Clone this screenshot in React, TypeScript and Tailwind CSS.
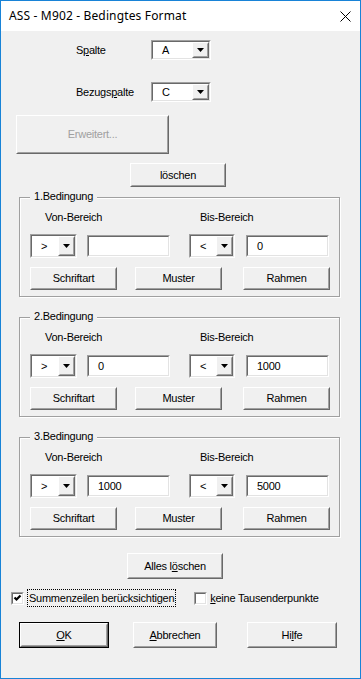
import React from "react";

const font = "font-['Tahoma','Liberation_Sans',sans-serif]";

function Raised({ children, className = "", disabled = false, isDefault = false }: { children?: React.ReactNode; className?: string; disabled?: boolean; isDefault?: boolean }) {
  const inner = (
    <div className="flex h-full w-full border border-t-white border-l-white border-r-[#696969] border-b-[#696969]">
      <div className={`flex h-full w-full items-center justify-center border border-t-[#f0f0f0] border-l-[#f0f0f0] border-r-[#a0a0a0] border-b-[#a0a0a0] bg-[#f0f0f0] ${disabled ? "text-[#a0a0a0]" : "text-black"}`}>
        {children}
      </div>
    </div>
  );
  if (isDefault) {
    return <div className={`border border-black ${className}`}>{inner}</div>;
  }
  return <div className={className}>{inner}</div>;
}

function Sunken({ children, className = "" }: { children?: React.ReactNode; className?: string }) {
  return (
    <div className={`flex border border-t-[#a0a0a0] border-l-[#a0a0a0] border-r-white border-b-white ${className}`}>
      <div className="flex h-full w-full border border-t-[#696969] border-l-[#696969] border-r-[#e3e3e3] border-b-[#e3e3e3] bg-white">
        {children}
      </div>
    </div>
  );
}

function Arrow() {
  return (
    <svg width="7" height="4" viewBox="0 0 7 4">
      <path d="M0 0h7L3.5 4z" fill="#000" />
    </svg>
  );
}

function Combo({ value, className }: { value: string; className: string }) {
  return (
    <Sunken className={className}>
      <span className="flex flex-1 items-center pl-[9px] text-[11px]">{value}</span>
      <Raised className="w-[17px]">
        <Arrow />
      </Raised>
    </Sunken>
  );
}

function Field({ value }: { value: string }) {
  return (
    <Sunken className="h-[22px] w-[83px]">
      <span className="flex items-center pl-[9px] text-[11px]">{value}</span>
    </Sunken>
  );
}

function Group({ n, von, bis }: { n: number; von: string; bis: string }) {
  return (
    <div className="relative ml-[18px] h-[100px] w-[321px] border border-[#a0a0a0] shadow-[inset_1px_1px_0_#fff,1px_1px_0_#fff]">
      <span className="absolute -top-[8px] left-[10px] bg-[#f0f0f0] px-[4px] text-[11px] leading-[13px]">{n}.Bedingung</span>
      <div className="flex pt-[13px] text-[11px] leading-[13px]">
        <span className="ml-[25px] w-[155px]">Von-Bereich</span>
        <span>Bis-Bereich</span>
      </div>
      <div className="mt-[10px] flex h-[24px] items-center">
        <Combo value=">" className="ml-[10px] h-[24px] w-[47px]" />
        <div className="ml-[10px]">
          <Field value={von} />
        </div>
        <Combo value="<" className="ml-[19px] h-[24px] w-[46px]" />
        <div className="ml-[11px]">
          <Field value={bis} />
        </div>
      </div>
      <div className="mt-[9px] flex h-[23px] text-[11px]">
        <Raised className="ml-[10px] w-[87px]">Schriftart</Raised>
        <Raised className="ml-[18px] w-[87px]">Muster</Raised>
        <Raised className="ml-[21px] w-[87px]">Rahmen</Raised>
      </div>
    </div>
  );
}

function Check({ checked }: { checked: boolean }) {
  return (
    <Sunken className="h-[13px] w-[13px]">
      {checked && (
        <svg width="9" height="9" viewBox="0 0 9 9">
          <path d="M1.5 3.5l2 2 4-4" stroke="#000" strokeWidth="2.2" fill="none" />
        </svg>
      )}
    </Sunken>
  );
}

export default function App() {
  return (
    <div className={`flex h-[679px] w-[361px] flex-col border border-[#1883d7] bg-[#f0f0f0] tracking-[-0.25px] text-black ${font}`}>
      <div className="flex h-[30px] items-center justify-between bg-white pl-[8px] pr-[9px]">
        <span className="font-['Noto_Sans',sans-serif] text-[12px] tracking-[0.15px]">ASS - M902 - Bedingtes Format</span>
        <svg width="11" height="11" viewBox="0 0 11 11">
          <path d="M0.5 0.5l10 10M10.5 0.5l-10 10" stroke="#000" strokeWidth="1" />
        </svg>
      </div>

      <div className="mt-[9px] flex items-center text-[11px]">
        <span className="ml-[75px] w-[75px]">
          S<u>p</u>alte
        </span>
        <Combo value="A" className="h-[20px] w-[60px]" />
      </div>
      <div className="mt-[22px] flex items-center text-[11px]">
        <span className="ml-[75px] w-[75px]">
          Bezugs<u>p</u>alte
        </span>
        <Combo value="C" className="h-[20px] w-[60px]" />
      </div>

      <Raised disabled className="ml-[15px] mt-[13px] h-[39px] w-[153px] text-[11px]">
        Erweitert...
      </Raised>
      <Raised className="ml-[129px] mt-[9px] h-[24px] w-[96px] text-[11px]">löschen</Raised>

      <div className="mt-[10px] flex flex-col gap-[20px]">
        <Group n={1} von="" bis="0" />
        <Group n={2} von="0" bis="1000" />
        <Group n={3} von="1000" bis="5000" />
      </div>

      <Raised className="ml-[126px] mt-[16px] h-[26px] w-[96px] text-[11px]">
        Alles l<u>ö</u>schen
      </Raised>

      <div className="mt-[10px] flex h-[18px] items-center text-[11px]">
        <div className="ml-[10px]">
          <Check checked />
        </div>
        <span className="ml-[3px] border border-dotted border-black px-[1px] leading-[16px]">Summenzeilen berücksichtigen</span>
        <div className="ml-[18px]">
          <Check checked={false} />
        </div>
        <span className="ml-[3px]">
          <u>k</u>eine Tausenderpunkte
        </span>
      </div>

      <div className="mt-[15px] flex h-[26px] text-[11px]">
        <Raised isDefault className="ml-[18px] w-[90px]">
          <u>O</u>K
        </Raised>
        <Raised className="ml-[24px] w-[84px]">
          <u>A</u>bbrechen
        </Raised>
        <Raised className="ml-[30px] w-[90px]">
          Hi<u>l</u>fe
        </Raised>
      </div>
    </div>
  );
}
